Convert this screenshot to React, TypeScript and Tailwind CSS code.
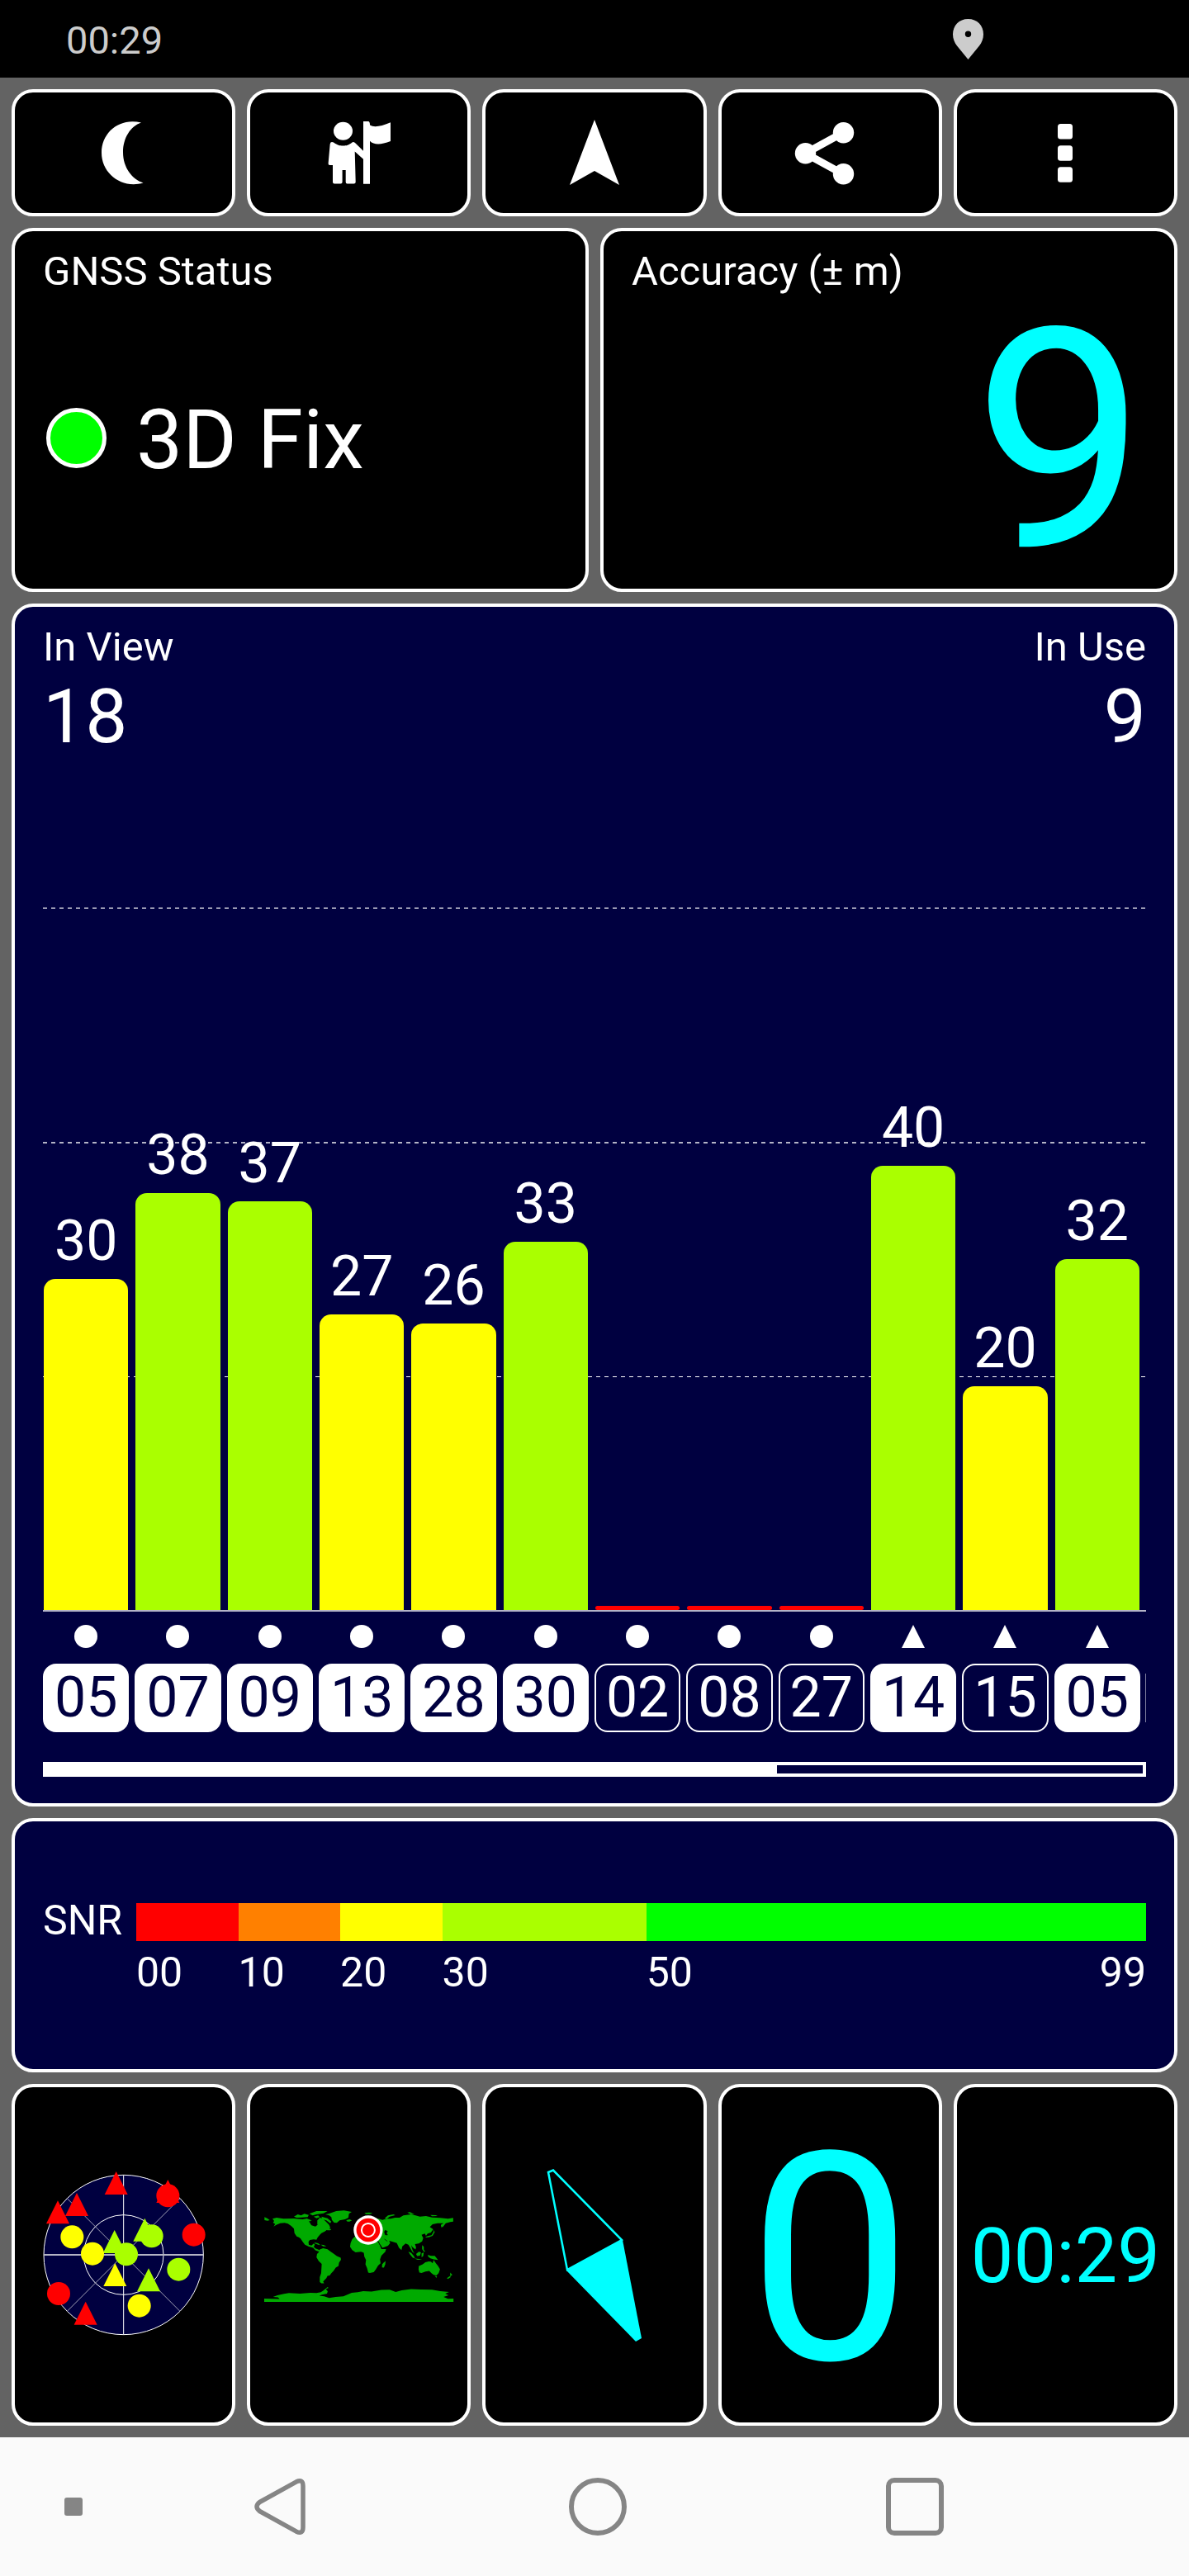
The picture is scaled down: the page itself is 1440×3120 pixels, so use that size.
import type { ReactNode } from "react";
import clsx from "clsx";

type Satellite = {
  id: string;
  snr: number;
  height: number;
  system: "gps" | "glonass";
  used: boolean;
};

const satellites: Satellite[] = [
  { id: "05", snr: 30, height: 401, system: "gps", used: true },
  { id: "07", snr: 38, height: 505, system: "gps", used: true },
  { id: "09", snr: 37, height: 495, system: "gps", used: true },
  { id: "13", snr: 27, height: 358, system: "gps", used: true },
  { id: "28", snr: 26, height: 347, system: "gps", used: true },
  { id: "30", snr: 33, height: 446, system: "gps", used: true },
  { id: "02", snr: 0, height: 5, system: "gps", used: false },
  { id: "08", snr: 0, height: 5, system: "gps", used: false },
  { id: "27", snr: 0, height: 5, system: "gps", used: false },
  { id: "14", snr: 40, height: 538, system: "glonass", used: true },
  { id: "15", snr: 20, height: 271, system: "glonass", used: false },
  { id: "05", snr: 32, height: 425, system: "glonass", used: true },
];

const snrScale = [
  { from: "00", span: 10, color: "bg-[#ff0000]" },
  { from: "10", span: 10, color: "bg-[#ff8000]" },
  { from: "20", span: 10, color: "bg-[#ffff00]" },
  { from: "30", span: 20, color: "bg-[#aaff00]" },
  { from: "50", span: 49, color: "bg-[#00ff00]" },
];

function barColor(snr: number) {
  if (snr > 30) return "bg-[#aaff00]";
  if (snr >= 20) return "bg-[#ffff00]";
  return "bg-[#ff0000]";
}

function Panel({ className, children }: { className?: string; children: ReactNode }) {
  return (
    <section className={clsx("rounded-[26px] border-4 border-white px-[34px]", className)}>
      {children}
    </section>
  );
}

function Tile({
  label,
  className,
  children,
}: {
  label: string;
  className?: string;
  children: ReactNode;
}) {
  return (
    <button
      type="button"
      aria-label={label}
      className={clsx(
        "flex min-w-0 flex-1 items-center justify-center rounded-[26px] border-4 border-white bg-black",
        className,
      )}
    >
      {children}
    </button>
  );
}

function MoonIcon() {
  return (
    <svg viewBox="0 0 80 80" className="size-20 fill-white">
      <path d="M61 3.5C35 -3 13 15 13 40C13 65 37 84 63.500 76.500C50 72 39 58 39 39.500C39 22 48 8 61 3.500Z" />
    </svg>
  );
}

function GuideIcon() {
  return (
    <svg viewBox="0 0 80 80" className="size-20 fill-white">
      <ellipse cx="20.500" cy="13.700" rx="11.500" ry="11" />
      <path d="M45 2h6q2 0 2 4.500Q60 11 78 3.300V26Q60 33 53 25.700V77.700H45V47.700L34.700 38.500L35.700 75.500Q35.700 77.500 33.500 77.500H25.500Q23.700 77.500 23.700 75.500V61H19.600V75.500Q19.600 77.500 17.500 77.500H10Q8 77.500 8 75.500V55H4.500Q2.400 55 2.600 53L4.700 29.500Q5.300 26 9 27.500C14 31 16 31.500 20.500 31.500C25 31.500 27 31 31.500 27.500Q33 26.500 35 28L45 37.700Z" />
    </svg>
  );
}

function ArrowIcon() {
  return (
    <svg viewBox="0 0 80 80" className="size-20 fill-white">
      <path d="M40 0L70 79L40 62L10 79Z" />
    </svg>
  );
}

function ShareIcon() {
  return (
    <svg viewBox="0 0 80 80" className="size-20 overflow-visible fill-white">
      <path d="M56 15.700L10.300 40.700L56 65.700" fill="none" stroke="white" strokeWidth="9" />
      <circle cx="56.500" cy="15.700" r="12.700" />
      <circle cx="10.500" cy="40.700" r="12.700" />
      <circle cx="56.500" cy="65.700" r="12.700" />
    </svg>
  );
}

function MoreIcon() {
  return (
    <svg viewBox="0 0 80 80" className="size-20 fill-white">
      <rect x="31" y="5" width="18" height="18.500" rx="3.500" />
      <rect x="31" y="31.300" width="18" height="18.500" rx="3.500" />
      <rect x="31" y="57.300" width="18" height="18.500" rx="3.500" />
    </svg>
  );
}

// Sky plot: circles are GPS, triangles are GLONASS, painted back to front
const skyMarks = [
  { shape: "triangle", x: 362, y: 132, fill: "#ff0000" },
  { shape: "triangle", x: 550, y: 162, fill: "#ff0000" },
  { shape: "triangle", x: 219, y: 210, fill: "#ff0000" },
  { shape: "triangle", x: 150, y: 238, fill: "#ff0000" },
  { shape: "triangle", x: 251, y: 605, fill: "#ff0000" },
  { shape: "triangle", x: 356, y: 345, fill: "#aaff00" },
  { shape: "triangle", x: 466, y: 302, fill: "#aaff00" },
  { shape: "triangle", x: 480, y: 484, fill: "#aaff00" },
  { shape: "triangle", x: 358, y: 465, fill: "#ffff00" },
  { shape: "circle", x: 550, y: 178, fill: "#ff0000" },
  { shape: "circle", x: 644, y: 320, fill: "#ff0000" },
  { shape: "circle", x: 153, y: 534, fill: "#ff0000" },
  { shape: "circle", x: 202, y: 328, fill: "#ffff00" },
  { shape: "circle", x: 276, y: 389, fill: "#ffff00" },
  { shape: "circle", x: 446, y: 578, fill: "#ffff00" },
  { shape: "circle", x: 491, y: 325, fill: "#aaff00" },
  { shape: "circle", x: 399, y: 391, fill: "#aaff00" },
  { shape: "circle", x: 589, y: 446, fill: "#aaff00" },
];

function SkyPlot() {
  return (
    <svg viewBox="0 3 780 780" className="w-[260px]">
      <circle cx="389" cy="393" r="290" fill="#000040" stroke="#ffffff" strokeWidth="3" />
      <circle cx="389" cy="393" r="145" fill="none" stroke="#ffffff" strokeWidth="3" />
      <path d="M184 188L594 598M594 188L184 598" stroke="#a0a0b4" strokeWidth="3" />
      <path d="M389 103V683" stroke="#ffffff" strokeWidth="3" />
      <path d="M99 393H679" stroke="#b4b4c4" strokeWidth="6" />
      {skyMarks.map((mark) =>
        mark.shape === "circle" ? (
          <circle key={`${mark.x}-${mark.y}`} cx={mark.x} cy={mark.y} r="42" fill={mark.fill} />
        ) : (
          <path
            key={`${mark.x}-${mark.y}`}
            d={`M${mark.x} ${mark.y - 42}l42 84h-84Z`}
            fill={mark.fill}
          />
        ),
      )}
    </svg>
  );
}

function WorldMap() {
  return (
    <svg viewBox="9 3 790 540" className="w-full">
      <g fill="#00aa00">
        {/* North and Central America */}
        <path d="M90 142L105 138L130 142L168 141L200 144L215 141L230 147L236 152L227 158L232 166L246 170L254 164L250 152L262 138L272 140L282 150L288 156L296 164L300 174L296 180L288 182L280 188L268 194L262 200L254 210L250 218L240 217L226 219L221 226L222 236L232 239L240 232L244 236L240 244L246 250L256 254L264 258L258 261L246 257L238 248L222 243L208 236L200 226L192 214L186 209L178 206L170 194L168 178L158 168L146 160L134 157L118 158L104 164L94 170L100 161L92 156L96 150Z" />
        <path d="M61 136L72 141L80 147L72 149L61 147ZM168 134L182 126L194 130L206 124L222 128L218 136L196 137L178 138ZM224 124L250 114L290 114L276 122L250 126L236 130ZM240 134L256 130L262 136L250 140ZM268 134L290 140L304 152L300 158L286 148L272 144ZM284 182L290 176L304 180L300 184L290 184Z" />
        <path d="M294 124L322 114L350 112L378 117L368 124L366 138L354 144L334 148L324 157L314 156L306 146L304 136L296 130L282 126ZM358 147L370 144L379 148L370 152L362 152Z" />
        <path d="M242 228L256 231L264 238L256 236L244 232ZM266 236L276 237L286 242L274 242Z" />
        {/* South America */}
        <path d="M262 254L274 249L290 253L302 262L314 270L324 278L338 284L339 291L332 302L330 314L320 320L312 332L304 340L298 348L290 350L286 358L280 364L274 371L278 377L268 377L262 372L262 354L267 340L269 306L258 296L250 282L252 270L258 264Z" />
        {/* Africa */}
        <path d="M390 206L402 203L422 202L440 212L464 214L472 222L480 238L486 252L503 252L500 262L486 276L481 290L483 304L474 312L466 326L458 336L444 339L438 338L434 322L428 308L430 292L424 280L422 266L412 262L392 264L380 256L372 244L374 230L380 216Z" />
        <path d="M494 302L501 296L500 308L495 320L488 319L489 308Z" />
        {/* Europe and Asia */}
        <path d="M390 202L392 190L402 186L396 178L410 170L424 164L436 148L452 138L476 142L490 146L504 142L520 142L536 138L552 138L566 130L594 126L610 130L626 134L648 132L670 137L700 139L728 142L747 139V152L736 154L720 158L714 166L704 174L702 164L712 158L690 158L672 162L662 172L674 180L666 192L654 196L648 204L644 196L632 200L638 212L634 224L622 232L608 234L612 246L610 254L600 246L594 238L600 258L606 268L598 262L590 246L584 236L574 232L562 242L559 256L550 248L542 230L528 226L514 222L518 230L510 240L490 248L480 234L472 218L462 208L440 204L428 198L414 194L404 200Z" />
        <path d="M498 140L510 130L530 126L536 129L516 134L506 142ZM424 121L440 119L454 121L444 125H430ZM580 119L590 118L606 126L592 125ZM664 128L684 129L690 132L670 133Z" />
        <path d="M646 208L658 204L668 202L674 192L676 188L673 180L680 190L672 204L658 209L648 210ZM706 172L716 162L718 158L710 172Z" />
        {/* South-east Asia and Oceania */}
        <path d="M584 262L594 266L604 278L608 286L600 284L590 272ZM606 287L624 288L634 290L618 291ZM612 270L622 262L630 264L626 276L616 278ZM632 268L640 264L638 278L632 282ZM634 238L640 244L640 256L646 260L640 262L634 252ZM655 273L666 277L680 277L692 292L676 290L664 286L656 280Z" />
        <path d="M622 314L636 308L646 300L658 297L666 298L672 304L676 292L684 304L692 314L699 326L694 340L686 348L676 346L668 340L660 332L646 334L632 339L624 338L621 326ZM680 350L688 351L686 357ZM736 338L744 346L736 351ZM724 358L736 350L738 354L728 361Z" />
        {/* Antarctica */}
        <path d="M60 432L116 434L110 428L92 426L108 420L132 415L150 412L190 414L228 411L250 412L266 409L276 402L290 390L294 393L284 398L291 406L288 414L270 418L260 422L278 424L296 430L320 426L348 424L378 411L400 409L420 405L450 407L486 401L516 400L538 408L560 402L594 398L630 399L670 400L700 405L732 408L718 414L730 420L712 426L728 433L748 432V444H60Z" />
      </g>
      <path
        d="M224 152L240 148L252 150V160L244 166L230 160ZM500 184L508 188L504 194L508 201L500 200L497 190ZM472 222L486 244M497 216L508 224"
        fill="#000000"
        stroke="#000000"
        strokeWidth="2"
      />
      <circle cx="438" cy="183" r="53" fill="#ffffff" />
      <circle cx="438" cy="183" r="43" fill="#ff0000" />
      <circle cx="438" cy="183" r="24" fill="#ff0000" stroke="#ffffff" strokeWidth="6" />
    </svg>
  );
}

function CompassNeedle() {
  return (
    <svg viewBox="0 0 140 220" className="w-[140px]">
      <path d="M14 10L20 7.500L103 92L37 128Z" fill="none" stroke="#00ffff" strokeWidth="2.500" />
      <path d="M104 92L127 211L120 215L36 129Z" fill="#00ffff" />
    </svg>
  );
}

function SatelliteChart() {
  return (
    <div>
      <div className="relative flex h-[1028px] items-end border-b-2 border-[#b4b4c8]">
        <svg className="absolute inset-0 h-full w-full" stroke="#ffffff" strokeDasharray="5 5">
          <line x1="0" y1="176" x2="100%" y2="176" strokeWidth="2" opacity="0.6" />
          <line x1="0" y1="460" x2="100%" y2="460" strokeWidth="2" opacity="0.7" />
          <line x1="0" y1="743.500" x2="100%" y2="743.500" strokeWidth="1" />
        </svg>
        {satellites.map((sat) => (
          <div key={sat.system + sat.id} className="relative flex-1 pr-2 pl-px text-center">
            {sat.snr > 0 && <div className="pb-1.5 text-[68px] leading-20">{sat.snr}</div>}
            <div
              className={clsx(sat.snr > 0 ? "rounded-t-[14px]" : "rounded-[3px]", barColor(sat.snr))}
              style={{ height: sat.height }}
            />
          </div>
        ))}
      </div>

      <div className="relative flex pt-4">
        {satellites.map((sat) => (
          <div key={sat.system + sat.id} className="flex-1 pr-[7px]">
            <svg viewBox="0 0 28 28" className="mx-auto size-7 fill-white">
              {sat.system === "gps" ? <circle cx="14" cy="14" r="14" /> : <path d="M14 0L28 28H0Z" />}
            </svg>
            <div
              className={clsx(
                "mt-[19px] rounded-2xl border-2 border-white text-center text-[68px] leading-[79px]",
                sat.used && "bg-white text-[#000040]",
              )}
            >
              {sat.id}
            </div>
          </div>
        ))}
        {/* Edge of the next satellite, still scrolled out of view */}
        <div className="absolute right-0 bottom-3 h-[59px] w-px bg-white/50" />
      </div>

      <div className="mt-9 border-4 border-white">
        <div className="h-2.5 w-2/3 bg-white" />
      </div>
    </div>
  );
}

export default function App() {
  return (
    <div className="flex min-h-screen flex-col bg-[#636363] font-['Roboto',sans-serif] text-white">
      <header className="flex h-[94px] items-center justify-between bg-black pr-[249px] pl-20">
        <span className="pt-1 text-[47px] text-[#cccccc]">00:29</span>
        <svg viewBox="0 0 37 49" className="h-[49px] w-[37px]">
          <path
            fillRule="evenodd"
            fill="#cccccc"
            d="M18.500 0C7.500 0 0 8 0 18.500C0 24 2 28.500 5 32.500L18.500 49L32 32.500C35 28.500 37 24 37 18.500C37 8 29.500 0 18.500 0ZM18.500 14.500a3.700 3.700 0 1 1 0 7.400a3.700 3.700 0 1 1 0-7.400Z"
          />
        </svg>
      </header>

      <main className="flex grow flex-col gap-3.5 p-3.5">
        {/* Toolbar */}
        <div className="flex h-[154px] gap-3.5">
          <Tile label="Night mode">
            <MoonIcon />
          </Tile>
          <Tile label="Guide">
            <GuideIcon />
          </Tile>
          <Tile label="Navigate">
            <ArrowIcon />
          </Tile>
          <Tile label="Share">
            <ShareIcon />
          </Tile>
          <Tile label="More">
            <MoreIcon />
          </Tile>
        </div>

        {/* Fix and accuracy */}
        <div className="flex gap-3.5">
          <Panel className="flex-1 bg-black pt-[21px]">
            <h2 className="text-[49px] leading-14">GNSS Status</h2>
            <div className="mt-[120px] flex items-baseline gap-9 pl-1">
              <span className="size-[73px] rounded-full border-[5px] border-white bg-[#00ff00]" />
              <span className="text-[100px] leading-28">3D Fix</span>
            </div>
          </Panel>
          <Panel className="flex-1 bg-black pt-[21px]">
            <h2 className="text-[49px] leading-14">Accuracy (± m)</h2>
            <div className="text-right text-[372px] leading-[356px] text-[#00ffff]">9</div>
          </Panel>
        </div>

        {/* Satellites */}
        <Panel className="bg-[#000040] pt-[21px] pb-8">
          <div className="flex justify-between">
            <div>
              <h2 className="text-[49px] leading-14">In View</h2>
              <div className="text-[91px] leading-28">18</div>
            </div>
            <div className="text-right">
              <h2 className="text-[49px] leading-14">In Use</h2>
              <div className="text-[91px] leading-28">9</div>
            </div>
          </div>
          <SatelliteChart />
        </Panel>

        {/* SNR legend */}
        <Panel className="flex bg-[#000040] pt-[99px] pb-[89px]">
          <h2 className="w-[113px] text-[50px] leading-[42px]">SNR</h2>
          <div className="relative flex grow">
            {snrScale.map((step) => (
              <div key={step.from} style={{ flex: `${step.span} 0 0px` }}>
                <div className={clsx("h-[46px]", step.color)} />
                <div className="pt-2.5 text-[50px] leading-14">{step.from}</div>
              </div>
            ))}
            <div className="absolute right-0 bottom-0 text-[50px] leading-14">99</div>
          </div>
        </Panel>

        {/* Pages */}
        <div className="flex min-h-[414px] grow gap-3.5">
          <Tile label="Sky view">
            <SkyPlot />
          </Tile>
          <Tile label="World map">
            <WorldMap />
          </Tile>
          <Tile label="Compass">
            <CompassNeedle />
          </Tile>
          <Tile label="Speed" className="pt-3 text-[352px] leading-none text-[#00ffff]">
            0
          </Tile>
          <Tile label="Time" className="pt-1 text-[92px] leading-none text-[#00ffff]">
            00:29
          </Tile>
        </div>
      </main>

      {/* System navigation */}
      <nav className="flex h-[168px] items-center bg-[#fafafa] pr-[140px]">
        <button type="button" aria-label="Hide bar" className="w-[148px] pl-[78px]">
          <span className="block size-[22px] rounded-[3px] bg-[#858585]" />
        </button>
        <button type="button" aria-label="Back" className="flex flex-1 justify-center">
          <svg viewBox="0 0 70 70" className="size-[70px]" fill="none" stroke="#858585">
            <path
              d="M54 4.800Q62 1 62 10V60Q62 69 54 65.200L9.500 40.500Q2.500 35 9.500 29.500Z"
              strokeWidth="5.500"
              strokeLinejoin="round"
            />
          </svg>
        </button>
        <button type="button" aria-label="Home" className="flex flex-1 justify-center">
          <span className="size-[70px] rounded-full border-[6px] border-[#858585]" />
        </button>
        <button type="button" aria-label="Recent apps" className="flex flex-1 justify-center">
          <span className="size-[70px] rounded-[10px] border-[6px] border-[#858585]" />
        </button>
      </nav>
    </div>
  );
}
